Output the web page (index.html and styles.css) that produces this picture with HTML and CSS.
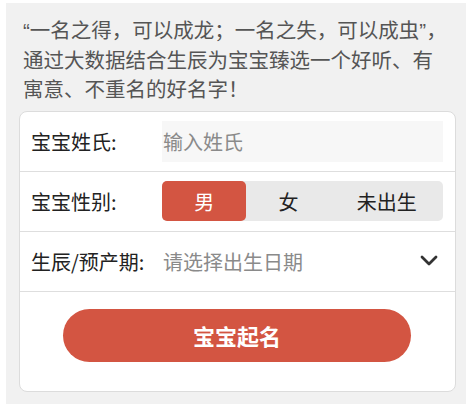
FILE: index.html
```html
<!DOCTYPE html>
<html lang="zh-CN">
<head>
<meta charset="utf-8">
<link rel="stylesheet" href="styles.css">
</head>
<body>
<div class="panel">
  <p class="intro">“一名之得，可以成龙；一名之失，可以成虫”，通过大数据结合生辰为宝宝臻选一个好听、有寓意、不重名的好名字！</p>
  <div class="card">
    <div class="row">
      <span class="label">宝宝姓氏:</span>
      <div class="input">输入姓氏</div>
    </div>
    <div class="row row-seg">
      <span class="label">宝宝性别:</span>
      <div class="seg">
        <span class="seg-item active">男</span>
        <span class="seg-item">女</span>
        <span class="seg-item">未出生</span>
      </div>
    </div>
    <div class="row">
      <span class="label">生辰/预产期:</span>
      <span class="placeholder">请选择出生日期</span>
      <svg class="chev" width="18" height="12" viewBox="0 0 18 12"><path d="M2 2 L9 9 L16 2" fill="none" stroke="#333" stroke-width="2.8" stroke-linecap="round" stroke-linejoin="round"/></svg>
    </div>
    <div class="btn-wrap">
      <div class="btn">宝宝起名</div>
    </div>
  </div>
</div>
</body>
</html>
```
FILE: styles.css
```css
html, body {
  margin: 0;
  padding: 0;
  background: #fff;
}
body {
  font-family: "Noto Sans CJK SC", "Noto Sans", sans-serif;
}
.panel {
  margin: 3px 8px 0 6px;
  height: 401px;
  background: #f1f1f1;
  padding: 13px 10px 0 13px;
  box-sizing: border-box;
}
.intro {
  margin: 0 0 6px 0;
  padding: 0 8px 0 4px;
  font-family: "Liberation Sans", "Noto Sans CJK SC", sans-serif;
  font-size: 20.5px;
  line-height: 29.5px;
  color: #555;
}
.card {
  background: #fff;
  border: 1px solid #dcdcdc;
  border-radius: 8px;
}
.row {
  display: flex;
  align-items: center;
  height: 59px;
  padding: 0 12px 0 11px;
  border-bottom: 1px solid #dedede;
}
.label {
  width: 131px;
  flex: none;
  font-size: 20px;
  color: #222;
}
.input {
  flex: 1;
  height: 41px;
  background: #f7f7f7;
  font-size: 20px;
  line-height: 41px;
  color: #8a8a8a;
  padding-left: 1px;
}
.seg {
  flex: 1;
  display: grid;
  grid-template-columns: 3fr 3fr 4fr;
  height: 40px;
  background: #e9e9e9;
  border-radius: 5px;
}
.seg-item {
  display: flex;
  align-items: center;
  justify-content: center;
  font-size: 20px;
  color: #222;
  border-radius: 5px;
}
.seg-item.active {
  background: #d35542;
  color: #fff;
}
.placeholder {
  flex: 1;
  font-size: 20px;
  color: #8a8a8a;
  padding-left: 1px;
}
.chev {
  margin-right: 5px;
  display: block;
}
.btn-wrap {
  padding: 17px 44px 29px 43px;
}
.btn {
  height: 53px;
  border-radius: 27px;
  background: #d35542;
  color: #fff;
  font-size: 22px;
  font-weight: bold;
  display: flex;
  align-items: center;
  justify-content: center;
}
```
